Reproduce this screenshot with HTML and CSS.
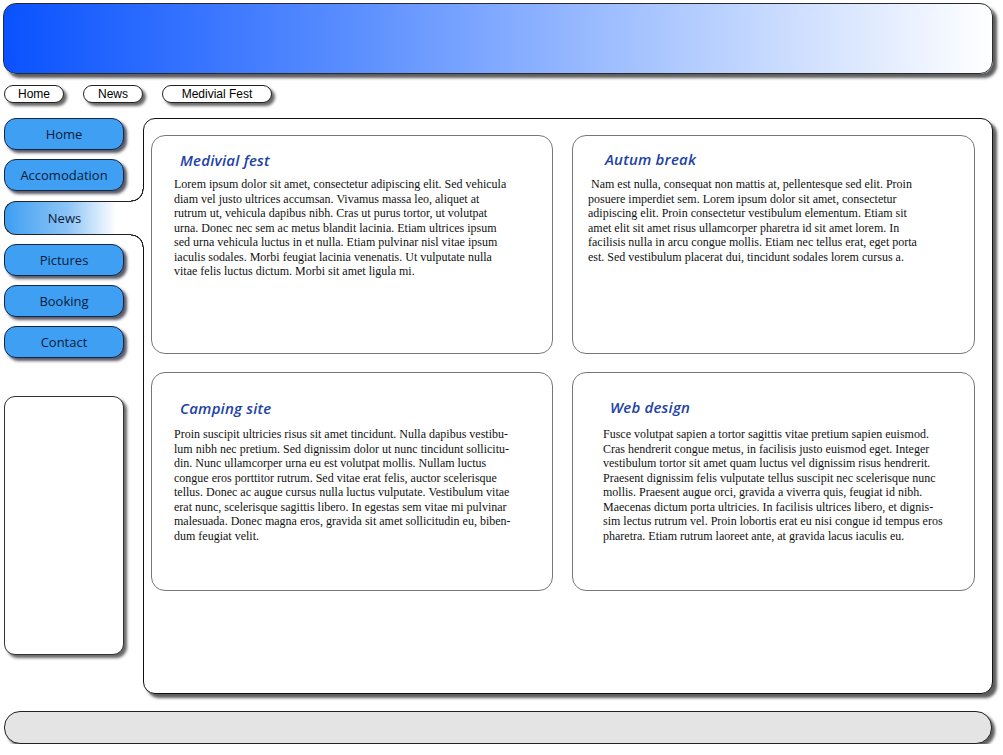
FILE: index.html
```html
<!DOCTYPE html>
<html lang="en">
<head>
<meta charset="utf-8">
<title>Medivial Fest - News</title>
<link rel="stylesheet" href="styles.css">
</head>
<body>
<div class="page">
  <header class="banner"></header>

  <nav class="crumbs">
    <a class="crumb crumb-short" href="#">Home</a>
    <a class="crumb crumb-short" href="#">News</a>
    <a class="crumb crumb-long" href="#">Medivial Fest</a>
  </nav>

  <div class="layout">
    <aside class="sidebar">
      <ul class="menu">
        <li><a class="menu-item" href="#">Home</a></li>
        <li><a class="menu-item" href="#">Accomodation</a></li>
        <li class="menu-current"><a class="menu-item active" href="#">News</a></li>
        <li><a class="menu-item" href="#">Pictures</a></li>
        <li><a class="menu-item" href="#">Booking</a></li>
        <li><a class="menu-item" href="#">Contact</a></li>
      </ul>
      <div class="side-box"></div>
    </aside>

    <main class="panel">
      <article class="card card-1">
        <h2 class="card-title">Medivial fest</h2>
        <p class="card-text">Lorem ipsum dolor sit amet, consectetur adipiscing elit. Sed vehicula diam vel justo ultrices accumsan. Vivamus massa leo, aliquet at rutrum ut, vehicula dapibus nibh. Cras ut purus tortor, ut volutpat urna. Donec nec sem ac metus blandit lacinia. Etiam ultrices ipsum sed urna vehicula luctus in et nulla. Etiam pulvinar nisl vitae ipsum iaculis sodales. Morbi feugiat lacinia venenatis. Ut vulputate nulla vitae felis luctus dictum. Morbi sit amet ligula mi.</p>
      </article>
      <article class="card card-2">
        <h2 class="card-title">Autum break</h2>
        <p class="card-text">&nbsp;Nam est nulla, consequat non mattis at, pellentesque sed elit. Proin posuere imperdiet sem. Lorem ipsum dolor sit amet, consectetur adipiscing elit. Proin consectetur vestibulum elementum. Etiam sit amet elit sit amet risus ullamcorper pharetra id sit amet lorem. In facilisis nulla in arcu congue mollis. Etiam nec tellus erat, eget porta est. Sed vestibulum placerat dui, tincidunt sodales lorem cursus a.</p>
      </article>
      <article class="card card-3">
        <h2 class="card-title">Camping site</h2>
        <p class="card-text">Proin suscipit ultricies risus sit amet tincidunt. Nulla dapibus vestibu&shy;lum nibh nec pretium. Sed dignissim dolor ut nunc tincidunt sollicitu&shy;din. Nunc ullamcorper urna eu est volutpat mollis. Nullam luctus congue eros porttitor rutrum. Sed vitae erat felis, auctor scelerisque tellus. Donec ac augue cursus nulla luctus vulputate. Vestibulum vitae erat nunc, scelerisque sagittis libero. In egestas sem vitae mi pulvinar malesuada. Donec magna eros, gravida sit amet sollicitudin eu, biben&shy;dum feugiat velit.</p>
      </article>
      <article class="card card-4">
        <h2 class="card-title">Web design</h2>
        <p class="card-text">Fusce volutpat sapien a tortor sagittis vitae pretium sapien euismod. Cras hendrerit congue metus, in facilisis justo euismod eget. Integer vestibulum tortor sit amet quam luctus vel dignissim risus hendrerit. Praesent dignissim felis vulputate tellus suscipit nec scelerisque nunc mollis. Praesent augue orci, gravida a viverra quis, feugiat id nibh. Maecenas dictum porta ultricies. In facilisis ultrices libero, et dignis&shy;sim lectus rutrum vel. Proin lobortis erat eu nisi congue id tempus eros pharetra. Etiam rutrum laoreet ante, at gravida lacus iaculis eu.</p>
      </article>
    </main>
  </div>

  <footer class="footer"></footer>
</div>
</body>
</html>
```

FILE: styles.css
```css
* {
  box-sizing: border-box;
}

html, body {
  margin: 0;
  padding: 0;
  background: #ffffff;
}

body {
  font-family: "Liberation Sans", Arial, sans-serif;
  color: #111;
}

.page {
  width: 1003px;
  padding: 3px 0 0 3px;
}

/* ---------- banner ---------- */
.banner {
  width: 990px;
  height: 71px;
  border: 1px solid #2a2a2a;
  border-radius: 13px;
  background: linear-gradient(to right, #0a52ff 0%, #5a8eff 35%, #b4cdff 70%, #ffffff 100%);
  box-shadow: 4px 4px 3px rgba(40, 40, 40, 0.75);
}

/* ---------- breadcrumbs ---------- */
.crumbs {
  display: flex;
  gap: 19px;
  margin: 11px 0 0 1px;
}

.crumb {
  display: block;
  height: 18px;
  line-height: 16px;
  border: 1px solid #222;
  border-radius: 9px;
  background: #fff;
  color: #000;
  font-family: "Liberation Sans", Arial, sans-serif;
  font-size: 12px;
  text-align: center;
  text-decoration: none;
  box-shadow: 3px 3px 3px rgba(40, 40, 40, 0.7);
}

.crumb-short {
  width: 60px;
}

.crumb-long {
  width: 110px;
}

/* ---------- layout ---------- */
.layout {
  display: grid;
  grid-template-columns: 120px 850px;
  column-gap: 19px;
  margin: 15px 0 0 1px;
}

.sidebar {
  position: relative;
  z-index: 2;
}

.menu {
  list-style: none;
  margin: 0;
  padding: 0;
  display: flex;
  flex-direction: column;
  gap: 9px;
}

.menu-current {
  margin-top: 1px;
}

.menu-item {
  position: relative;
  display: block;
  height: 32px;
  line-height: 30px;
  border: 1px solid #14264a;
  border-radius: 12px;
  background: #3f9ff2;
  color: #0b1b38;
  font-family: "Open Sans", "Noto Sans", sans-serif;
  font-size: 13px;
  text-align: center;
  text-decoration: none;
  box-shadow: 3px 3px 3px rgba(20, 20, 40, 0.7);
}

.menu-item.active {
  width: 140px;
  height: 34px;
  line-height: 32px;
  padding-right: 20px;
  border-right: 0;
  border-radius: 12px 0 0 12px;
  border-color: #222;
  background: linear-gradient(to right, #3f9ff2 0%, #8cc4f7 45%, #ffffff 80%);
  box-shadow: none;
}

.menu-item.active::before,
.menu-item.active::after {
  content: "";
  position: absolute;
  right: 0;
  width: 13px;
  height: 13px;
}

.menu-item.active::before {
  top: -13px;
  background: radial-gradient(circle at 0 0, #fff 0, #fff 11.2px, #222 11.6px, #222 12.4px, #fff 12.8px);
}

.menu-item.active::after {
  bottom: -13px;
  background: radial-gradient(circle at 0 100%, #fff 0, #fff 11.2px, #222 11.6px, #222 12.4px, #fff 12.8px);
}

.side-box {
  height: 259px;
  margin-top: 38px;
  border: 1px solid #333;
  border-radius: 11px;
  background: #fff;
  box-shadow: 3px 3px 3px rgba(40, 40, 40, 0.7);
}

/* ---------- main panel ---------- */
.panel {
  height: 576px;
  border: 1px solid #111;
  border-radius: 12px;
  background: #fff;
  box-shadow: 4px 4px 3px rgba(40, 40, 40, 0.75);
  padding: 16px 17px 0 7px;
  display: grid;
  grid-template-columns: 402px 403px;
  grid-template-rows: 219px 219px;
  column-gap: 19px;
  row-gap: 18px;
  align-content: start;
}

.card {
  border: 1px solid #777;
  border-radius: 14px;
  background: #fff;
}

.card-title {
  margin: 0;
  font-family: "Open Sans", "Noto Sans", sans-serif;
  font-style: italic;
  font-weight: 600;
  font-size: 15px;
  line-height: 20px;
  color: #1d42a6;
  letter-spacing: 0.2px;
}

.card-text {
  margin: 0;
  font-family: "Liberation Serif", "Times New Roman", serif;
  font-size: 12px;
  line-height: 14.5px;
  color: #111;
  hyphens: manual;
}

.card-1 {
  padding: 14px 0 0 22px;
}
.card-1 .card-title {
  margin: 0 0 7px 6px;
}
.card-1 .card-text {
  width: 336px;
}

.card-2 {
  padding: 13px 0 0 15px;
}
.card-2 .card-title {
  margin: 0 0 8px 17px;
}
.card-2 .card-text {
  width: 334px;
}

.card-3 {
  padding: 25px 0 0 22px;
}
.card-3 .card-title {
  margin: 0 0 9px 6px;
}
.card-3 .card-text {
  width: 342px;
}

.card-4 {
  padding: 24px 0 0 30px;
}
.card-4 .card-title {
  margin: 0 0 10px 7px;
}
.card-4 .card-text {
  width: 341px;
}

/* ---------- footer ---------- */
.footer {
  width: 988px;
  height: 33px;
  margin: 17px 0 0 1px;
  border: 1px solid #222;
  border-radius: 16px;
  background: #e4e4e4;
  box-shadow: 3px 3px 3px rgba(40, 40, 40, 0.75);
}
```
